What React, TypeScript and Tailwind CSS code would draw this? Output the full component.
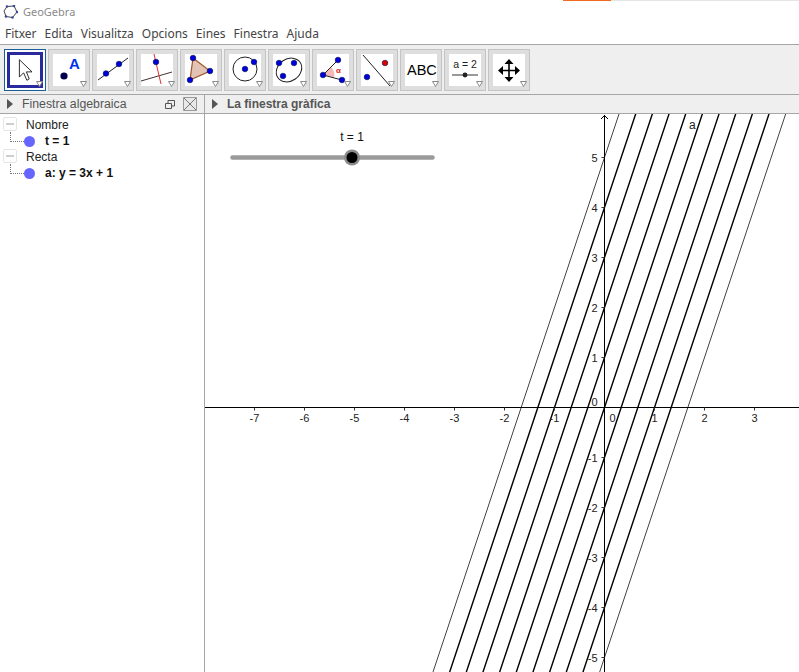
import type { ReactNode } from "react";

const font = { fontFamily: "'Liberation Sans', Arial, sans-serif" };
const menuFont = { fontFamily: "'Noto Sans', 'Liberation Sans', sans-serif" };
const menus = ["Fitxer", "Edita", "Visualitza", "Opcions", "Eines", "Finestra", "Ajuda"];

// graph scale: origin is at 399.5, 293.5 inside the canvas, 50px per unit
const ox = 399.5;
const oy = 293.5;
const unit = 50;
const xLabels = [-7, -6, -5, -4, -3, -2, -1, 1, 2, 3];
const yLabels = [5, 4, 3, 2, 1, -1, -2, -3, -4, -5];
const offsets = [-5, -4, -3, -2, -1, 0, 1, 2, 3, 4, 5];

function Pt({ x, y, c = "#0000dd", r = 2.8 }: { x: number; y: number; c?: string; r?: number }) {
  return <circle cx={x} cy={y} r={r} fill={c} stroke="#001050" strokeWidth="0.6" />;
}

function Tool({ children, active }: { children: ReactNode; active?: boolean }) {
  return (
    <div
      className={
        active
          ? "relative h-[42px] w-[42px] shrink-0 border border-[#1b5f99] bg-white p-[2px]"
          : "relative h-[42px] w-[42px] shrink-0 border border-[#c4c4c4] bg-[#dedede] p-[4px]"
      }
    >
      <div className={active ? "h-full w-full border-[3px] border-[#2a2a9e] bg-white" : "h-full w-full bg-white"}>
        <svg viewBox="0 0 32 32" className="h-full w-full" style={font}>
          {children}
        </svg>
      </div>
      <svg viewBox="0 0 7 6" className="absolute bottom-[3px] right-[2px] h-[6px] w-[7px]">
        <path d="M0.5 0.5H6.5L3.5 5.5Z" fill="#fff" stroke="#888" />
      </svg>
    </div>
  );
}

function Caret() {
  return (
    <svg viewBox="0 0 6 10" className="h-[10px] w-[6px] shrink-0">
      <path d="M0 0L6 5L0 10Z" fill="#555" />
    </svg>
  );
}

function TreeGroup({ name, value }: { name: string; value: string }) {
  return (
    <div>
      <div className="flex h-[16px] items-center text-[12px] text-[#222]">
        <div className="ml-[3px] flex h-[14px] w-[14px] items-center justify-center rounded-[2px] border border-[#e4e4e4]">
          <div className="h-[2px] w-[8px] bg-[#cfcfcf]" />
        </div>
        <span className="ml-[9px] pt-[1px]">{name}</span>
      </div>
      <div className="flex h-[16px] items-start pl-[10px]">
        <div className="h-[10px] w-[14px] border-b border-l border-dotted border-[#777]" />
        <div className="mt-[4px] h-[11px] w-[11px] rounded-full bg-[#6666ff]" />
        <span className="ml-[10px] text-[12px] font-bold leading-[19px] text-[#111]">{value}</span>
      </div>
    </div>
  );
}

function Graph() {
  return (
    <svg className="h-full w-full" viewBox="0 0 594 558" style={font}>
      {/* lines y = 3x + c */}
      {offsets.map((c) => {
        const outer = Math.abs(c) === 5;
        const at = (yUnits: number) => ox + ((yUnits - c) / 3) * unit;
        return (
          <line
            key={c}
            x1={at(-6)}
            y1={oy + 6 * unit}
            x2={at(6)}
            y2={oy - 6 * unit}
            stroke={outer ? "#444" : "#000"}
            strokeWidth={outer ? 1 : 1.4}
          />
        );
      })}
      {/* axes */}
      <line x1="0" y1={oy} x2="594" y2={oy} stroke="#000" />
      <line x1={ox} y1="1" x2={ox} y2="558" stroke="#000" />
      <path d="M396 5L399.5 1.5L403 5" fill="none" stroke="#000" />
      {xLabels.map((n) => (
        <g key={n}>
          <line x1={ox + n * unit} y1={oy} x2={ox + n * unit} y2={oy + 3} stroke="#333" />
          <text x={ox + n * unit} y={oy + 14} textAnchor="middle" fontSize="11" fill="#222">
            {n < 0 ? `-${-n}` : n}
          </text>
        </g>
      ))}
      {yLabels.map((n) => (
        <g key={n}>
          <line x1={ox - 3} y1={oy - n * unit} x2={ox} y2={oy - n * unit} stroke="#333" />
          <text x={ox - 7} y={oy - n * unit + 4} textAnchor="end" fontSize="11" fill="#222">
            {n < 0 ? `-${-n}` : n}
          </text>
        </g>
      ))}
      <text x={ox - 7} y={oy - 2} textAnchor="end" fontSize="11" fill="#222">0</text>
      <text x={ox + 5} y={oy + 14} fontSize="11" fill="#222">0</text>
      <text x="484" y="15" fontSize="12" fill="#222">a</text>
      {/* slider */}
      <text x="147" y="27" textAnchor="middle" fontSize="12" fill="#111">t = 1</text>
      <line x1="27.5" y1="43.5" x2="227.5" y2="43.5" stroke="#9a9a9a" strokeWidth="4.5" strokeLinecap="round" />
      <circle cx="147" cy="43.5" r="8" fill="#8c8c8c" />
      <circle cx="147" cy="43.5" r="5.5" fill="#000" />
    </svg>
  );
}

export default function App() {
  return (
    <div className="flex h-[672px] w-[799px] flex-col overflow-hidden bg-white" style={font}>
      {/* title bar */}
      <div className="relative flex h-[24px] items-center pl-[3px]">
        <div className="absolute left-[563px] right-0 top-0 h-px bg-[#e6e6e6]" />
        <div className="absolute left-[563px] top-0 h-px w-[48px] bg-[#f26a1b]" />
        <svg viewBox="0 0 15 14" className="h-[14px] w-[15px]">
          <path d="M4 1.5L11 1L14 7L9.5 12.5L3 11.5L1 6Z" fill="none" stroke="#444" />
          {[[4, 1.5], [11, 1], [14, 7], [9.5, 12.5], [3, 11.5]].map(([x, y]) => (
            <circle key={x} cx={x} cy={y} r="1.3" fill="#3b4a9a" />
          ))}
        </svg>
        <span className="ml-[5px] text-[11px] text-[#8a8a8a]" style={menuFont}>GeoGebra</span>
      </div>
      {/* menu */}
      <div className="flex h-[20px] items-center gap-[8px] pl-[5px] text-[12px] text-[#444]" style={menuFont}>
        {menus.map((m) => (
          <span key={m}>{m}</span>
        ))}
      </div>
      {/* toolbar */}
      <div className="flex h-[51px] items-start gap-[2px] border-y border-[#a6a6a6] bg-[#efefef] pl-[4px] pt-[4px]">
        <Tool active>
          <path d="M10 5V23.5L14.5 19L18 27L20.5 25.5L17.5 18H23.5Z" fill="#fff" stroke="#222" strokeWidth="1" strokeLinejoin="round" />
        </Tool>
        <Tool>
          <circle cx="11" cy="22" r="3.6" fill="#000050" />
          <text x="16" y="15" fontSize="15" fontWeight="700" fill="#0033ee">A</text>
        </Tool>
        <Tool>
          <line x1="1" y1="26" x2="31" y2="4" stroke="#222" />
          <Pt x={9} y={19.5} />
          <Pt x={22} y={10} />
        </Tool>
        <Tool>
          <line x1="0" y1="27" x2="31" y2="18" stroke="#443333" />
          <line x1="13" y1="0" x2="20" y2="30" stroke="#e03030" />
          <Pt x={15} y={8} />
        </Tool>
        <Tool>
          <path d="M8 4L25 17L5 26Z" fill="#e3c4b4" stroke="#a0522d" strokeWidth="1.2" />
          <Pt x={8} y={4} />
          <Pt x={25} y={17} />
          <Pt x={5} y={26} />
        </Tool>
        <Tool>
          <circle cx="16" cy="15" r="12" fill="none" stroke="#222" />
          <Pt x={16} y={15} />
          <Pt x={25} y={8} />
        </Tool>
        <Tool>
          <ellipse cx="16" cy="16" rx="13.5" ry="11" transform="rotate(-35 16 16)" fill="none" stroke="#222" />
          <Pt x={6} y={9} />
          <Pt x={21} y={9} />
          <Pt x={10} y={22} />
        </Tool>
        <Tool>
          <path d="M6 21L14 13A11 11 0 0 1 17 23.5Z" fill="#f4b8b8" />
          <path d="M21 6L6 21L25 26" fill="none" stroke="#222" />
          <Pt x={21} y={6} />
          <Pt x={6} y={21} />
          <Pt x={25} y={26} />
          <text x="19" y="19" fontSize="8" fontWeight="700" fill="#e02020">α</text>
        </Tool>
        <Tool>
          <line x1="2" y1="1" x2="29" y2="32" stroke="#222" />
          <Pt x={24} y={9} c="#e00000" />
          <Pt x={6} y={23} />
        </Tool>
        <Tool>
          <text x="2" y="21" fontSize="14.5" fill="#000">ABC</text>
        </Tool>
        <Tool>
          <text x="16" y="14" textAnchor="middle" fontSize="10.5" fill="#222">a = 2</text>
          <line x1="3" y1="21" x2="29" y2="21" stroke="#333" />
          <circle cx="16" cy="21" r="2.4" fill="#222" />
        </Tool>
        <Tool>
          <path d="M16 8V25M8 16.5H25" stroke="#000" strokeWidth="1.6" />
          <path d="M16 5L11.5 10H20.5ZM16 28L11.5 23H20.5ZM5 16.5L10 12V21ZM27 16.5L22 12V21Z" fill="#000" />
        </Tool>
      </div>
      {/* panels */}
      <div className="flex min-h-0 flex-1">
        <div className="flex w-[205px] shrink-0 flex-col border-r border-[#a6a6a6]">
          <div className="flex h-[19px] items-center border-b border-[#a6a6a6] bg-[#efefef] pl-[7px] pr-[7px] text-[12.3px] text-[#555]">
            <Caret />
            <span className="ml-[9px]">Finestra algebraica</span>
            <svg viewBox="0 0 10 9" className="ml-auto h-[9px] w-[10px]">
              <path d="M0.5 3.5H6.5V8.5H0.5ZM3 3V0.5H9.5V6H7" fill="none" stroke="#555" />
            </svg>
            <svg viewBox="0 0 14 14" className="ml-[8px] h-[14px] w-[14px]">
              <path d="M0.5 0.5H13.5V13.5H0.5Z" fill="#e8e8e8" stroke="#999" />
              <path d="M1 1L13 13M13 1L1 13" stroke="#777" />
            </svg>
          </div>
          <div className="pt-[2px]">
            <TreeGroup name="Nombre" value="t = 1" />
            <TreeGroup name="Recta" value="a: y = 3x + 1" />
          </div>
        </div>
        <div className="flex min-w-0 flex-1 flex-col">
          <div className="flex h-[19px] items-center border-b border-[#a6a6a6] bg-[#efefef] pl-[7px] text-[12px] font-bold text-[#555]">
            <Caret />
            <span className="ml-[9px]">La finestra gràfica</span>
          </div>
          <div className="min-h-0 flex-1">
            <Graph />
          </div>
        </div>
      </div>
    </div>
  );
}
